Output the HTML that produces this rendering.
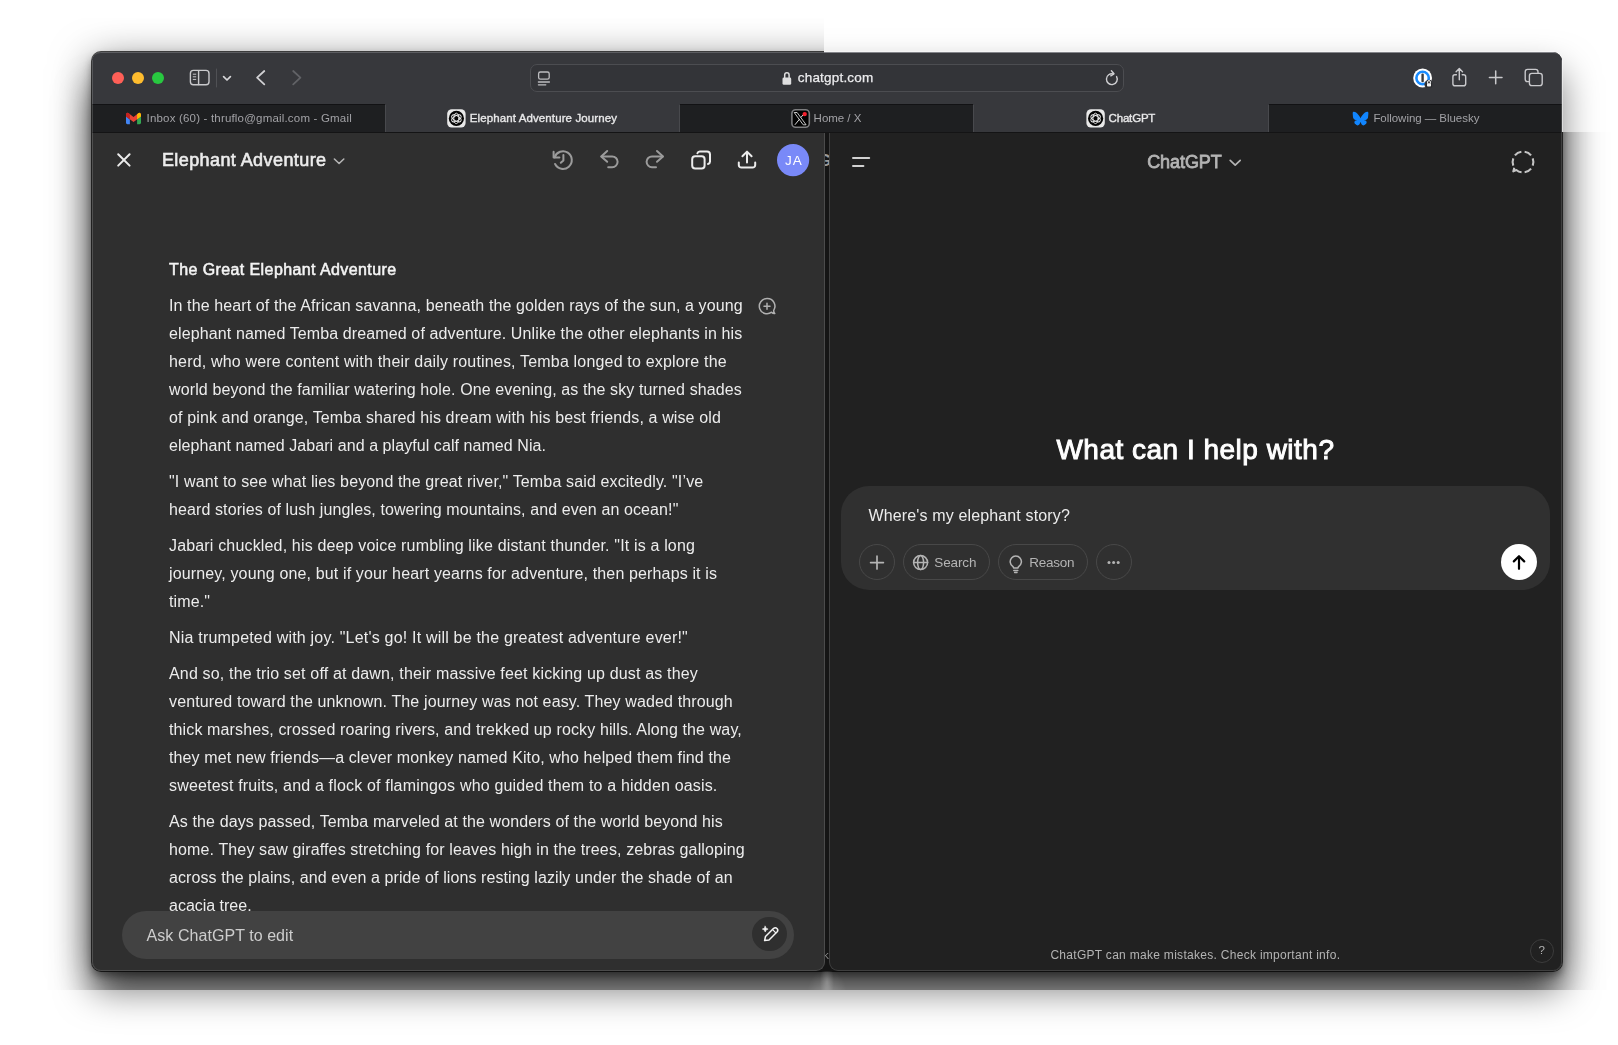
<!DOCTYPE html>
<html lang="en">
<head>
<meta charset="utf-8">
<title>ChatGPT</title>
<style>
*{box-sizing:border-box;margin:0;padding:0}
html,body{width:1618px;height:1045px;overflow:hidden;background:#fff}
body{position:relative;font-family:"Liberation Sans",sans-serif;-webkit-font-smoothing:antialiased}
.abs{position:absolute}
.t{position:absolute;white-space:nowrap;line-height:1;display:block}
svg{position:absolute;overflow:visible}
.winbox{position:absolute;left:92px;top:52px;width:1470px;height:919px;border-radius:9px}
#sh-faint{box-shadow:0 0 0 1px rgba(255,255,255,.45),0 20px 36px rgba(0,0,0,.5)}
#sh-clip{position:absolute;left:0;top:0;width:1618px;height:1045px;clip-path:polygon(39px 18px,824px 18px,824px 132px,1618px 132px,1618px 990px,39px 990px)}
#sh-clip2{position:absolute;left:0;top:0;width:1618px;height:1045px;clip-path:polygon(evenodd,0 0,1618px 0,1618px 1045px,0 1045px,0 0,39px 18px,824px 18px,824px 132px,1618px 132px,1618px 990px,39px 990px,39px 18px)}
#sh-strong{box-shadow:0 0 0 1px rgba(0,0,0,.7),0 5px 9px rgba(0,0,0,.41),0 10px 40px rgba(0,0,0,.59),0 41px 36px rgba(0,0,0,.5)}
#win{position:absolute;left:0;top:0;width:1618px;height:1045px;clip-path:inset(52px 56px 74px 92px round 9px);background:#151515}
#txt{position:absolute;left:0;top:0;width:1618px;height:1045px;will-change:transform}
#toolbar{left:92px;top:52px;width:1470px;height:52px;background:#37383c;border-top:1px solid #5d5e62;border-radius:9px 9px 0 0}
#tabbar{left:92px;top:104px;width:1470px;height:29px;background:#1e1f21;border-top:1px solid #121214;border-bottom:1px solid #141415}
.tab-act{top:104px;height:28px;background:#37383c}
.tabsep{top:105px;width:1px;height:27px;background:#48494d}
#lp{left:92px;top:133px;width:733px;height:838px;background:#2f2f2f;border:1px solid #4b4b4b;border-top:none;border-radius:0 0 9px 9px;border-left-color:#505050}
#rp{left:829px;top:133px;width:733px;height:838px;background:#212121;border:1px solid #3f3f3f;border-top:none;border-radius:0 0 9px 9px}
#url{left:530px;top:64px;width:594px;height:28px;border-radius:7px;background:#333438;border:1px solid #4c4d51}
.pill{border:1px solid #484848;border-radius:18px;height:36px;top:544.3px}
</style>
</head>
<body>
<div id="sh-clip2"><div class="winbox" id="sh-faint"></div></div>
<div id="sh-clip"><div class="winbox" id="sh-strong"></div><div class="abs" style="left:797px;top:966px;width:60px;height:52px;background:radial-gradient(ellipse 20px 26px at 50% 56%,rgba(255,255,255,.18),rgba(255,255,255,0) 100%)"></div><div class="abs" style="left:807px;top:960px;width:40px;height:40px;background:radial-gradient(ellipse 7px 19px at 50% 55%,rgba(255,255,255,.22),rgba(255,255,255,0) 100%)"></div></div>
<div id="win">
  <div class="abs" id="toolbar"></div>
  <div class="abs" style="left:824px;top:52px;width:738px;height:1px;background:#84858a;border-radius:0 9px 0 0"></div>
  <div class="abs" id="tabbar"></div>
  <div class="abs tab-act" style="left:385px;width:295px"></div>
  <div class="abs tab-act" style="left:973px;width:296px"></div>
  <div class="abs tabsep" style="left:385px"></div>
  <div class="abs tabsep" style="left:679px"></div>
  <div class="abs tabsep" style="left:973px"></div>
  <div class="abs tabsep" style="left:1268px"></div>
  <div class="abs" style="left:92px;top:60px;width:1px;height:73px;background:rgba(255,255,255,.16)"></div>
  <div class="abs" style="left:1561px;top:60px;width:1px;height:73px;background:rgba(255,255,255,.16)"></div>
  <div class="abs" id="lp"></div>
  <div class="abs" id="rp"></div>

  <!-- traffic lights -->
  <div class="abs" style="left:112px;top:72px;width:12px;height:12px;border-radius:50%;background:#fe5f57"></div>
  <div class="abs" style="left:132px;top:72px;width:12px;height:12px;border-radius:50%;background:#febc2e"></div>
  <div class="abs" style="left:152px;top:72px;width:12px;height:12px;border-radius:50%;background:#28c840"></div>

  <!-- toolbar left icons -->
  <svg style="left:0;top:0" width="1618" height="140" viewBox="0 0 1618 140" fill="none" stroke-linecap="round" stroke-linejoin="round">
    <g stroke="#c9c9cc" stroke-width="1.4">
      <rect x="190.4" y="70.4" width="18.6" height="14.4" rx="3"/>
      <path d="M198.6 70.6V84.6"/>
      <path d="M193.2 74.2h2.6M193.2 76.8h2.6M193.2 79.4h2.6" stroke-width="1"/>
    </g>
    <path d="M216.5 69V87" stroke="#505155" stroke-width="1"/>
    <path d="M223.6 76.6l3.4 3.4 3.4-3.4" stroke="#d6d6d8" stroke-width="1.7"/>
    <path d="M264.3 71l-7.2 6.7 7.2 6.7" stroke="#d0d0d3" stroke-width="1.8"/>
    <path d="M293.2 71l7.2 6.7-7.2 6.7" stroke="#616266" stroke-width="1.8"/>
  </svg>

  <!-- url bar -->
  <div class="abs" id="url"></div>
  <svg style="left:0;top:0" width="1618" height="140" viewBox="0 0 1618 140" fill="none" stroke-linecap="round" stroke-linejoin="round">
    <!-- reader/page icon -->
    <g stroke="#bdbdc0" stroke-width="1.3">
      <rect x="538.6" y="72" width="10.6" height="7.2" rx="1.8"/>
      <path d="M538.4 82h11M538.4 84.8h7.4"/>
    </g>
    <!-- lock -->
    <rect x="782.5" y="77.5" width="8.7" height="7.3" rx="1.4" fill="#dededf"/>
    <path d="M784.7 77.6v-2.7a2.2 2.2 0 0 1 4.4 0v2.7" stroke="#dededf" stroke-width="1.5"/>
    <!-- reload -->
    <path d="M1116.6 76.6a5.4 5.4 0 1 1 -3.2 -2.6" stroke="#cfcfd2" stroke-width="1.4"/>
    <path d="M1111.4 70.8l2.6 3 -3.2 2" stroke="#cfcfd2" stroke-width="1.4"/>
  </svg>

  <!-- toolbar right icons -->
  <svg style="left:0;top:0" width="1618" height="140" viewBox="0 0 1618 140" fill="none" stroke-linecap="round" stroke-linejoin="round">
    <!-- 1password-ish -->
    <circle cx="1422.6" cy="78" r="9.4" fill="#ffffff"/>
    <circle cx="1422.6" cy="78" r="6.2" stroke="#1a8cff" stroke-width="2.6"/>
    <rect x="1421.4" y="73.6" width="2.4" height="8.6" rx="1" fill="#3a3b3f"/>
    <circle cx="1429" cy="84.4" r="4.6" fill="#37383c"/>
    <rect x="1425.8" y="82.6" width="6.4" height="5" rx="1" fill="#2a2b2e"/>
    <rect x="1427" y="83.2" width="4" height="3.4" rx=".8" fill="#f2f2f2"/>
    <path d="M1427.6 83.2v-1.2a1.4 1.4 0 0 1 2.8 0v1.2" stroke="#f2f2f2" stroke-width="1"/>
    <!-- share -->
    <g stroke="#c9c9cc" stroke-width="1.4">
      <path d="M1456.4 74.8h-1.4a2.1 2.1 0 0 0 -2.1 2.1v6.8a2.1 2.1 0 0 0 2.1 2.1h8.6a2.1 2.1 0 0 0 2.1 -2.1v-6.8a2.1 2.1 0 0 0 -2.1 -2.1h-1.4"/>
      <path d="M1459.3 79.8V68.8M1456.1 71.8l3.2-3.2 3.2 3.2"/>
    </g>
    <!-- plus -->
    <path d="M1489.4 77.4h12.6M1495.7 71.1v12.6" stroke="#c9c9cc" stroke-width="1.5"/>
    <!-- tabs -->
    <g stroke="#c9c9cc" stroke-width="1.4">
      <path d="M1528.6 81.6h-1a2.4 2.4 0 0 1 -2.4 -2.4v-7.4a2.4 2.4 0 0 1 2.4 -2.4h8a2.4 2.4 0 0 1 2.4 2.4v1.2"/>
      <rect x="1529.4" y="73.4" width="12.8" height="12.2" rx="2.4"/>
    </g>
  </svg>

  <!-- tab icons -->
  <svg style="left:0;top:0" width="1618" height="140" viewBox="0 0 1618 140" fill="none" stroke-linecap="round" stroke-linejoin="round">
    <!-- gmail -->
    <g stroke="none">
      <path d="M126 116.6V114.6a1.7 1.7 0 0 1 2.7-1.4L133.5 117l4.8-3.8a1.7 1.7 0 0 1 2.7 1.4v2L133.5 122z" fill="#ea4335"/>
      <path d="M126 116.4l3.9 3V124.2h-2.5a1.4 1.4 0 0 1-1.4-1.4z" fill="#4285f4"/>
      <path d="M141 116.4l-3.9 3V124.2h2.5a1.4 1.4 0 0 0 1.4-1.4z" fill="#34a853"/>
      <path d="M126 116.4V114.6a1.7 1.7 0 0 1 2.7-1.4l1.2 .95v5.25z" fill="#c5221f"/>
      <path d="M141 116.4V114.6a1.7 1.7 0 0 0-2.7-1.4l-1.2 .95v5.25z" fill="#fbbc04"/>
    </g>
    <!-- chatgpt icon tab2 -->
    <g>
      <rect x="447.2" y="109.2" width="18.4" height="18.4" rx="4.6" fill="#e9e9e9"/>
      <circle cx="456.4" cy="118.4" r="7.6" fill="#050505"/>
      <g stroke="#f0f0f0" stroke-width=".9" fill="none">
        <ellipse cx="456.4" cy="118.4" rx="2.6" ry="5.2"/>
        <ellipse cx="456.4" cy="118.4" rx="2.6" ry="5.2" transform="rotate(60 456.4 118.4)"/>
        <ellipse cx="456.4" cy="118.4" rx="2.6" ry="5.2" transform="rotate(120 456.4 118.4)"/>
      </g>
    </g>
    <g transform="translate(639.2 0)">
      <rect x="447.2" y="109.2" width="18.4" height="18.4" rx="4.6" fill="#e9e9e9"/>
      <circle cx="456.4" cy="118.4" r="7.6" fill="#050505"/>
      <g stroke="#f0f0f0" stroke-width=".9" fill="none">
        <ellipse cx="456.4" cy="118.4" rx="2.6" ry="5.2"/>
        <ellipse cx="456.4" cy="118.4" rx="2.6" ry="5.2" transform="rotate(60 456.4 118.4)"/>
        <ellipse cx="456.4" cy="118.4" rx="2.6" ry="5.2" transform="rotate(120 456.4 118.4)"/>
      </g>
    </g>
    <!-- X icon -->
    <rect x="791.9" y="109.8" width="17.4" height="17.4" rx="3.8" fill="#030303" stroke="#7d7d7f" stroke-width="1.6"/>
    <path d="M794.6 112.5h2.5l9 12.3h-2.5z" stroke="#f2f2f2" stroke-width=".8" stroke-linejoin="miter" fill="none"/>
    <path d="M794.9 124.8l4.6-5.6M801 117.4l2.2-2.7" stroke="#f2f2f2" stroke-width=".9" stroke-linecap="butt"/>
    <circle cx="804.7" cy="114.1" r="2.2" fill="#f4212e"/>
    <!-- bluesky -->
    <path d="M1356.1 112.6c1.8 1.35 3.73 4.09 4.44 5.56 .71-1.47 2.64-4.21 4.44-5.56 1.3-.97 3.4-1.72 3.4 .67 0 .48-.27 4.01-.43 4.58-.56 1.98-2.58 2.49-4.38 2.18 3.15 .54 3.95 2.31 2.22 4.09-3.29 3.37-4.72-.85-5.09-1.93-.07-.2-.1-.29-.16-.29s-.09 .09-.16 .29c-.37 1.08-1.8 5.3-5.09 1.93-1.73-1.78-.93-3.55 2.22-4.09-1.8 .31-3.82-.2-4.38-2.18-.16-.57-.43-4.1-.43-4.58 0-2.39 2.1-1.64 3.4-.67z" fill="#1185fe"/>
  </svg>

  <!-- left header icons -->
  <svg style="left:0;top:0" width="1618" height="400" viewBox="0 0 1618 400" fill="none" stroke-linecap="round" stroke-linejoin="round">
    <path d="M118.2 154.2l11.4 11.4M129.6 154.2l-11.4 11.4" stroke="#ececec" stroke-width="2"/>
    <path d="M334.4 159l4.7 4.5 4.7-4.5" stroke="#b4b4b4" stroke-width="1.6"/>
    <!-- history -->
    <g stroke="#9b9b9b" stroke-width="2">
      <path d="M554.6 157.4a8.8 8.8 0 1 1 .5 6.6"/>
      <path d="M553.6 151.8v5.8h5.8"/>
      <path d="M563.4 155v5.4l-2.6 2.4"/>
    </g>
    <!-- undo -->
    <g stroke="#9b9b9b" stroke-width="2">
      <path d="M607.2 151l-6 5.4 6 5.4"/>
      <path d="M601.6 156.4h10.6a5.4 5.4 0 0 1 0 10.8h-4"/>
    </g>
    <!-- redo -->
    <g stroke="#9b9b9b" stroke-width="2">
      <path d="M657 151l6 5.4-6 5.4"/>
      <path d="M662.6 156.4h-10.6a5.4 5.4 0 0 0 0 10.8h4"/>
    </g>
    <!-- copy -->
    <g stroke="#ececec" stroke-width="2">
      <rect x="692.2" y="156.2" width="12.4" height="12.4" rx="3"/>
      <path d="M697.4 153.2a2.6 2.6 0 0 1 2.4-1.8h7.2a3 3 0 0 1 3 3v7.2a2.6 2.6 0 0 1 -2 2.4"/>
    </g>
    <!-- upload -->
    <g stroke="#ececec" stroke-width="2">
      <path d="M747 162.6v-10.6M742.4 156.2l4.6-4.6 4.6 4.6"/>
      <path d="M738.8 162.4v2.6a2.6 2.6 0 0 0 2.6 2.6h11.2a2.6 2.6 0 0 0 2.6-2.6v-2.6"/>
    </g>
    <circle cx="793.1" cy="160.1" r="16.1" fill="#7989f8"/>
    <!-- comment plus -->
    <g stroke="#b0b0b0" stroke-width="1.5">
      <path d="M767 298.6a7.6 7.6 0 1 0 4.6 13.6c.8 .9 2 1.4 3.2 1.3 -.9-.9-1.2-2-1.1-3.200a7.6 7.6 0 0 0 -6.700-11.700z"/>
      <path d="M767 303.200v6M764 306.200h6"/>
    </g>
  </svg>

  <!-- left bottom pill -->
  <div class="abs" style="left:122px;top:911px;width:672px;height:48px;border-radius:24px;background:#424242"></div>
  <div class="abs" style="left:752.4px;top:916.6px;width:34.4px;height:34.4px;border-radius:50%;background:#2f2f2f"></div>
  <svg style="left:0;top:0" width="1618" height="1045" viewBox="0 0 1618 1045" fill="none" stroke-linecap="round" stroke-linejoin="round">
    <g stroke="#f4f4f4" stroke-width="1.5">
      <path d="M764.6 940.600l.9-4.100 8.200-8.200a2.500 2.500 0 0 1 3.500 3.500l-8.200 8.200z"/>
      <path d="M772.4 929.400l3.400 3.400" stroke-width="1.2"/>
    </g>
    <path d="M765.2 926.200l.9 2 2 .9-2 .9-.9 2-.9-2-2-.9 2-.9z" fill="#f4f4f4" stroke="#f4f4f4" stroke-width=".6"/>
  </svg>

  <!-- gap strip partial glyph -->
  <div class="abs" style="left:825px;top:150px;width:4px;height:24px;overflow:hidden"><span style="position:absolute;left:-7px;top:2px;font-size:17px;font-weight:700;color:#9a9a9a;line-height:1">G</span></div>

  <div class="abs" style="left:825px;top:950.5px;width:4px;height:14px;overflow:hidden;will-change:transform"><span style="position:absolute;left:-2px;top:1px;font-size:9px;color:#9a9a9a;line-height:1">K</span></div>

  <!-- right header -->
  <svg style="left:0;top:0" width="1618" height="400" viewBox="0 0 1618 400" fill="none" stroke-linecap="round" stroke-linejoin="round">
    <path d="M853 158h16.200M853 166h10.400" stroke="#d2d2d2" stroke-width="2"/>
    <path d="M1230.200 160.400l5 4.800 5-4.800" stroke="#b4b4b4" stroke-width="1.700"/>
    <!-- new chat dashed -->
    <g stroke="#c4c4c4" stroke-width="2.1" stroke-linecap="butt">
      <path d="M1514.92 155.46A10.4 10.4 0 0 1 1521.37 151.73"/>
      <path d="M1524.63 151.73A10.4 10.4 0 0 1 1531.08 155.46"/>
      <path d="M1532.71 158.27A10.4 10.4 0 0 1 1532.71 165.73"/>
      <path d="M1531.08 168.54A10.4 10.4 0 0 1 1524.63 172.27"/>
      <path d="M1513.29 165.73A10.4 10.4 0 0 1 1513.29 158.27"/>
      <path d="M1521.55 172.30A10.4 10.4 0 0 1 1516.32 169.97L1513.30 171.40L1514.28 167.66" stroke-linejoin="round"/>
    </g>
  </svg>

  <!-- composer -->
  <div class="abs" style="left:841px;top:486.3px;width:709px;height:104px;border-radius:28px;background:#303030"></div>
  <div class="abs pill" style="left:859px;width:36px"></div>
  <div class="abs pill" style="left:903px;width:86.500px"></div>
  <div class="abs pill" style="left:998px;width:89.500px"></div>
  <div class="abs pill" style="left:1095.500px;width:36px"></div>
  <div class="abs" style="left:1501px;top:544.300px;width:36px;height:36px;border-radius:50%;background:#ffffff"></div>
  <svg style="left:0;top:0" width="1618" height="700" viewBox="0 0 1618 700" fill="none" stroke-linecap="round" stroke-linejoin="round">
    <path d="M870.600 562.600h12.800M877 556.200v12.800" stroke="#b4b4b4" stroke-width="1.700"/>
    <!-- globe -->
    <g stroke="#b4b4b4" stroke-width="1.500">
      <circle cx="920.600" cy="562.600" r="7"/>
      <ellipse cx="920.600" cy="562.600" rx="3" ry="7"/>
      <path d="M913.600 562.600h14"/>
    </g>
    <!-- bulb -->
    <g stroke="#b4b4b4" stroke-width="1.500">
      <path d="M1012.700 566.300a5.600 5.600 0 1 1 6.200 0c-.6 .5-.9 1-.9 1.800h-4.400c0-.8-.3-1.300-.9-1.800z"/>
      <path d="M1013.800 570.400h4M1014.600 572.400h2.400"/>
    </g>
    <circle cx="1109" cy="562.600" r="1.500" fill="#b4b4b4"/>
    <circle cx="1113.600" cy="562.600" r="1.500" fill="#b4b4b4"/>
    <circle cx="1118.200" cy="562.600" r="1.500" fill="#b4b4b4"/>
    <path d="M1519 568.800v-12.200M1513.800 561.400l5.200-5.200 5.200 5.200" stroke="#000" stroke-width="2.200"/>
  </svg>

  <!-- help button -->
  <div class="abs" style="left:1529.600px;top:938.600px;width:24px;height:24px;border-radius:50%;border:1px solid #3c3c3c"></div>

</div>
<div id="txt">
<span class="t" id="t0" style="left:797.80px;top:71.07px;font-size:13.5px;color:#ececee;font-weight:400;letter-spacing:0.185px;-webkit-text-stroke:.25px #ececee;">chatgpt.com</span>
<span class="t" id="t1" style="left:146.50px;top:113.47px;font-size:11.5px;color:#a2a2a6;font-weight:400;letter-spacing:0.187px;">Inbox (60) - thruflo@gmail.com - Gmail</span>
<span class="t" id="t2" style="left:469.70px;top:113.47px;font-size:11.5px;color:#e9e9ea;font-weight:400;letter-spacing:0.112px;-webkit-text-stroke:.35px #e9e9ea;">Elephant Adventure Journey</span>
<span class="t" id="t3" style="left:813.60px;top:113.47px;font-size:11.5px;color:#a2a2a6;font-weight:400;letter-spacing:-0.020px;">Home / X</span>
<span class="t" id="t4" style="left:1108.60px;top:113.47px;font-size:11.5px;color:#e9e9ea;font-weight:400;letter-spacing:-0.190px;-webkit-text-stroke:.35px #e9e9ea;">ChatGPT</span>
<span class="t" id="t5" style="left:1373.40px;top:113.47px;font-size:11.5px;color:#a2a2a6;font-weight:400;letter-spacing:-0.041px;">Following — Bluesky</span>
<span class="t" id="t6" style="left:161.90px;top:150.96px;font-size:18px;color:#ececec;font-weight:400;letter-spacing:0.416px;-webkit-text-stroke:.6px #ececec;">Elephant Adventure</span>
<span class="t" id="t7" style="left:784.90px;top:153.57px;font-size:13.5px;color:#ffffff;font-weight:400;letter-spacing:1.034px;">JA</span>
<span class="t" id="t8" style="left:169.00px;top:261.96px;font-size:16px;color:#f4f4f4;font-weight:400;letter-spacing:0.406px;-webkit-text-stroke:.55px #f4f4f4;">The Great Elephant Adventure</span>
<span class="t" id="t9" style="left:169.00px;top:297.86px;font-size:16px;color:#ececec;font-weight:400;letter-spacing:0.111px;">In the heart of the African savanna, beneath the golden rays of the sun, a young</span>
<span class="t" id="t10" style="left:169.00px;top:325.86px;font-size:16px;color:#ececec;font-weight:400;letter-spacing:0.117px;">elephant named Temba dreamed of adventure. Unlike the other elephants in his</span>
<span class="t" id="t11" style="left:169.00px;top:353.86px;font-size:16px;color:#ececec;font-weight:400;letter-spacing:0.179px;">herd, who were content with their daily routines, Temba longed to explore the</span>
<span class="t" id="t12" style="left:169.00px;top:381.86px;font-size:16px;color:#ececec;font-weight:400;letter-spacing:0.116px;">world beyond the familiar watering hole. One evening, as the sky turned shades</span>
<span class="t" id="t13" style="left:169.00px;top:409.86px;font-size:16px;color:#ececec;font-weight:400;letter-spacing:0.128px;">of pink and orange, Temba shared his dream with his best friends, a wise old</span>
<span class="t" id="t14" style="left:169.00px;top:437.86px;font-size:16px;color:#ececec;font-weight:400;letter-spacing:0.068px;">elephant named Jabari and a playful calf named Nia.</span>
<span class="t" id="t15" style="left:169.00px;top:473.86px;font-size:16px;color:#ececec;font-weight:400;letter-spacing:0.142px;">"I want to see what lies beyond the great river," Temba said excitedly. "I’ve</span>
<span class="t" id="t16" style="left:169.00px;top:501.86px;font-size:16px;color:#ececec;font-weight:400;letter-spacing:0.106px;">heard stories of lush jungles, towering mountains, and even an ocean!"</span>
<span class="t" id="t17" style="left:169.00px;top:537.86px;font-size:16px;color:#ececec;font-weight:400;letter-spacing:0.165px;">Jabari chuckled, his deep voice rumbling like distant thunder. "It is a long</span>
<span class="t" id="t18" style="left:169.00px;top:565.86px;font-size:16px;color:#ececec;font-weight:400;letter-spacing:0.144px;">journey, young one, but if your heart yearns for adventure, then perhaps it is</span>
<span class="t" id="t19" style="left:169.00px;top:593.86px;font-size:16px;color:#ececec;font-weight:400;letter-spacing:0.128px;">time."</span>
<span class="t" id="t20" style="left:169.00px;top:629.86px;font-size:16px;color:#ececec;font-weight:400;letter-spacing:0.198px;">Nia trumpeted with joy. "Let's go! It will be the greatest adventure ever!"</span>
<span class="t" id="t21" style="left:169.00px;top:665.86px;font-size:16px;color:#ececec;font-weight:400;letter-spacing:0.165px;">And so, the trio set off at dawn, their massive feet kicking up dust as they</span>
<span class="t" id="t22" style="left:169.00px;top:693.86px;font-size:16px;color:#ececec;font-weight:400;letter-spacing:0.134px;">ventured toward the unknown. The journey was not easy. They waded through</span>
<span class="t" id="t23" style="left:169.00px;top:721.86px;font-size:16px;color:#ececec;font-weight:400;letter-spacing:0.127px;">thick marshes, crossed roaring rivers, and trekked up rocky hills. Along the way,</span>
<span class="t" id="t24" style="left:169.00px;top:749.86px;font-size:16px;color:#ececec;font-weight:400;letter-spacing:0.121px;">they met new friends—a clever monkey named Kito, who helped them find the</span>
<span class="t" id="t25" style="left:169.00px;top:777.86px;font-size:16px;color:#ececec;font-weight:400;letter-spacing:0.172px;">sweetest fruits, and a flock of flamingos who guided them to a hidden oasis.</span>
<span class="t" id="t26" style="left:169.00px;top:813.86px;font-size:16px;color:#ececec;font-weight:400;letter-spacing:0.122px;">As the days passed, Temba marveled at the wonders of the world beyond his</span>
<span class="t" id="t27" style="left:169.00px;top:841.86px;font-size:16px;color:#ececec;font-weight:400;letter-spacing:0.133px;">home. They saw giraffes stretching for leaves high in the trees, zebras galloping</span>
<span class="t" id="t28" style="left:169.00px;top:869.86px;font-size:16px;color:#ececec;font-weight:400;letter-spacing:0.096px;">across the plains, and even a pride of lions resting lazily under the shade of an</span>
<span class="t" id="t29" style="left:169.00px;top:897.86px;font-size:16px;color:#ececec;font-weight:400;letter-spacing:-0.011px;">acacia tree.</span>
<span class="t" id="t30" style="left:146.60px;top:928.06px;font-size:16px;color:#cdcdcd;font-weight:400;letter-spacing:0.053px;">Ask ChatGPT to edit</span>
<span class="t" id="t31" style="left:1147.20px;top:152.96px;font-size:18px;color:#b4b4b4;font-weight:400;letter-spacing:-0.072px;-webkit-text-stroke:.8px #b4b4b4;">ChatGPT</span>
<span class="t" id="t32" style="left:1056.40px;top:435.90px;font-size:28px;color:#ffffff;font-weight:400;letter-spacing:0.495px;-webkit-text-stroke:.95px #ffffff;">What can I help with?</span>
<span class="t" id="t33" style="left:868.50px;top:507.86px;font-size:16px;color:#ececec;font-weight:400;letter-spacing:0.140px;">Where's my elephant story?</span>
<span class="t" id="t34" style="left:934.30px;top:555.87px;font-size:13.5px;color:#b4b4b4;font-weight:400;letter-spacing:-0.116px;">Search</span>
<span class="t" id="t35" style="left:1029.30px;top:555.87px;font-size:13.5px;color:#b4b4b4;font-weight:400;letter-spacing:-0.269px;">Reason</span>
<span class="t" id="t36" style="left:1050.40px;top:949.14px;font-size:12px;color:#b4b4b4;font-weight:400;letter-spacing:0.292px;">ChatGPT can make mistakes. Check important info.</span>
<span class="t" id="t37" style="left:1538.60px;top:944.87px;font-size:11.5px;color:#b4b4b4;font-weight:400;letter-spacing:0.000px;">?</span>
</div>
</body>
</html>
